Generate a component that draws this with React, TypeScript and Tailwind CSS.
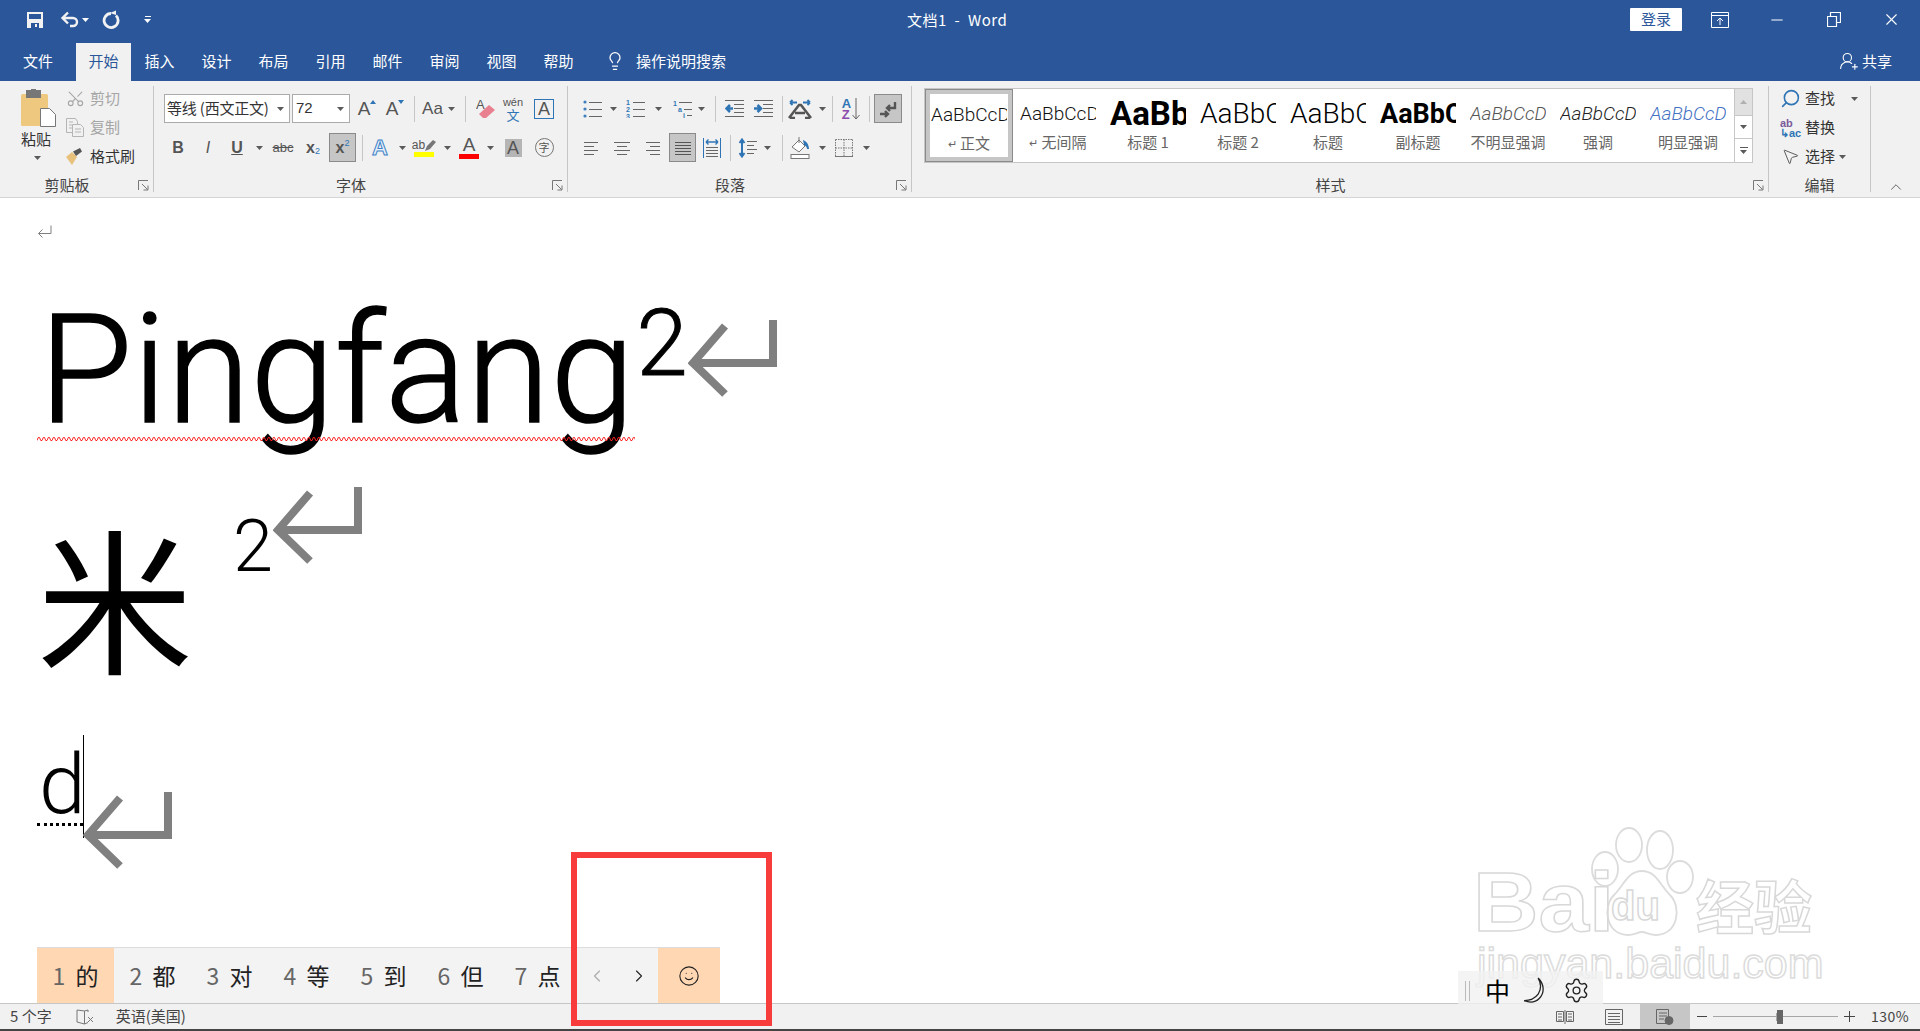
import type { ReactNode } from "react";
import {
  ChevronLeft,
  ChevronRight,
  ChevronUp,
  Lightbulb,
  Minus,
  MousePointer2,
  Scissors,
  Search,
  Settings,
  Smile,
  UserRoundPlus,
  X,
} from "lucide-react";

const Caret = ({ light }: { light?: boolean }) => (
  <svg width="7" height="4" viewBox="0 0 7 4" className="shrink-0">
    <path d="M0 0h7L3.5 4z" fill={light ? "#ffffff" : "#5a5a5a"} />
  </svg>
);

const Slot = ({ className, children }: { className: string; children?: ReactNode }) => (
  <div className={`flex h-full shrink-0 items-center justify-center ${className}`}>{children}</div>
);

const RowSep = ({ className }: { className: string }) => (
  <div className={`flex h-full shrink-0 items-center justify-center ${className}`}>
    <div className="h-[26px] w-px bg-[#c6c6c6]" />
  </div>
);

const Launcher = () => (
  <div className="flex w-[19px] shrink-0 items-center justify-center">
    <svg width="11" height="11" viewBox="0 0 11 11" fill="none" stroke="#777777">
      <path d="M.5 10V.5H10M4 4l5.5 5.5M5.5 10H10V5.5" />
    </svg>
  </div>
);

const Group = ({
  className,
  label,
  launcher = true,
  children,
}: {
  className: string;
  label: string;
  launcher?: boolean;
  children: ReactNode;
}) => (
  <div className={`flex h-full shrink-0 flex-col ${className}`}>
    <div className="h-[93px] min-h-0">{children}</div>
    <div className="flex h-[22px] items-center text-[15px] text-[#444444]">
      <span className="flex-1 text-center">{label}</span>
      {launcher && <Launcher />}
    </div>
  </div>
);

const GroupSep = () => <div className="my-[5px] w-px shrink-0 bg-[#c6c6c6]" />;

const Lines = ({ d, color = "#666666" }: { d: string; color?: string }) => (
  <svg width="18" height="16" viewBox="0 0 18 16" fill="none" stroke={color}>
    <path d={d} />
  </svg>
);

const BulletList = () => (
  <svg width="19" height="18" viewBox="0 0 19 18">
    {[2, 9, 16].map((y) => (
      <circle key={y} cx="2" cy={y} r="1.6" fill="#3f7fbf" />
    ))}
    <path d="M6 2.500h13M6 9.500h13M6 16.500h13" stroke="#666666" fill="none" />
  </svg>
);

const NumberList = () => (
  <svg width="19" height="18" viewBox="0 0 19 18">
    {["1", "2", "3"].map((n, i) => (
      <text key={n} x="0" y={5 + i * 7} fontSize="7" fontWeight="700" fill="#2f75b5" fontFamily="Liberation Sans">
        {n}
      </text>
    ))}
    <path d="M7 2.500h12M7 9.500h12M7 16.500h12" stroke="#666666" fill="none" />
  </svg>
);

const IndentIcon = ({ flip }: { flip?: boolean }) => (
  <svg width="19" height="18" viewBox="0 0 19 18" fill="none">
    <path d="M0 .5h19M9 4.500h10M9 8.500h10M9 12.500h10M0 16.500h19" stroke="#666666" />
    <path
      d={flip ? "M0 8.500h6M3.500 5l3.500 3.500L3.500 12" : "M8 8.500H2M5 5L1.500 8.500 5 12"}
      stroke="#2f75b5"
      strokeWidth="2.600"
    />
  </svg>
);

const StyleItem = ({
  preview,
  label,
  mark,
  className,
}: {
  preview: string;
  label: string;
  mark?: boolean;
  className: string;
}) => (
  <div className="flex h-full w-[90px] shrink-0 flex-col items-center">
    <div className="flex h-[50px] w-[76px] items-center justify-start overflow-hidden whitespace-nowrap">
      <span className={`[font-family:'Roboto','Liberation_Sans',sans-serif] ${className}`}>{preview}</span>
    </div>
    <div className="mt-[-6px] flex h-[19px] items-center gap-[3px] whitespace-nowrap text-[15px] text-[#666666]">
      {mark && <span className="text-[11px]">↵</span>}
      {label}
    </div>
  </div>
);

const ReturnMark = () => (
  <svg width="90" height="78" viewBox="0 0 90 78" fill="none" stroke="#808080" strokeWidth="8" className="shrink-0">
    <path d="M85 0v43H8" />
    <path d="M37 6L5 43l32 31" />
  </svg>
);

const Candidate = ({ n, ch, active }: { n: number; ch: string; active?: boolean }) => (
  <div
    className={`flex h-full w-[77px] shrink-0 items-center justify-center gap-[10px] ${active ? "bg-[#ffd7b3]" : ""}`}
  >
    <span className="text-[#666666]">{n}</span>
    <span className="text-[#222222]">{ch}</span>
  </div>
);

export default function App() {
  return (
    <div className="relative flex h-[1031px] w-[1920px] flex-col overflow-hidden bg-white [font-family:'Noto_Sans_CJK_SC','Liberation_Sans',sans-serif]">
      {/* title + tabs */}
      <div className="h-[81px] shrink-0 bg-[#2b579a] text-white">
        <div className="flex h-[41px] items-center pb-[2px]">
          <div className="flex w-[907px] shrink-0 items-center">
            <Slot className="ml-[24px] w-[22px]">
              <svg width="16" height="16" viewBox="0 0 16 16">
                <path d="M0 0h16v16H0z" fill="#f2f2f2" />
                <path d="M2 2h12v5H2zM4 11h8v5H4z" fill="#2b579a" />
                <path d="M8 12h2v3H8z" fill="#f2f2f2" />
              </svg>
            </Slot>
            <Slot className="ml-[13px] w-[22px]">
              <svg width="20" height="17" viewBox="0 0 20 17" fill="none" stroke="#f2f2f2" strokeWidth="2.400">
                <path d="M3 7h10a4 4 0 0 1 0 8h-3M8 1.500L2.500 7 8 12.500" />
              </svg>
            </Slot>
            <Slot className="w-[9px]">
              <Caret light />
            </Slot>
            <Slot className="ml-[11px] w-[20px]">
              <svg width="18" height="19" viewBox="0 0 18 19" fill="none" stroke="#f2f2f2" strokeWidth="2.800">
                <path d="M9 3.500a7 7 0 1 0 5 2" />
                <path d="M8 3l6-2.500V5z" fill="#f2f2f2" stroke="none" />
              </svg>
            </Slot>
            <div className="ml-[23px] flex flex-col items-center gap-[2px]">
              <div className="h-px w-[6px] bg-white" />
              <Caret light />
            </div>
          </div>
          <span className="whitespace-pre text-[15px] leading-none tracking-[0.5px]">文档1  -  Word</span>
          <div className="ml-auto flex items-center">
            <div className="flex h-[23px] w-[52px] items-center justify-center rounded-[1px] bg-white text-[15px] text-[#2b579a]">
              登录
            </div>
            <Slot className="ml-[27px] w-[22px]">
              <svg width="18" height="16" viewBox="0 0 18 16" fill="none" stroke="#ffffff">
                <path d="M.5.500h17v15H.5zM.5 3.500h17M9 13V6M6 9l3-3 3 3" />
              </svg>
            </Slot>
            <Slot className="ml-[35px] w-[22px]">
              <Minus size={18} strokeWidth={1.4} />
            </Slot>
            <Slot className="ml-[35px] w-[22px]">
              <svg width="14" height="15" viewBox="0 0 14 15" fill="none" stroke="#ffffff" strokeWidth="1.200">
                <path d="M.5 4.500h9v10h-9zM3.500 4.500v-4h10v10h-4" />
              </svg>
            </Slot>
            <Slot className="ml-[35px] mr-[18px] w-[22px]">
              <X size={19} strokeWidth={1.4} />
            </Slot>
          </div>
        </div>
        <div className="flex h-[40px] items-end text-[15px]">
          <div className="flex h-[38px] w-[76px] items-center justify-center pb-[2px]">文件</div>
          <div className="flex h-[38px] w-[55px] items-center justify-center bg-[#f1f1f1] pb-[2px] text-[#2b579a]">
            开始
          </div>
          {["插入", "设计", "布局", "引用", "邮件", "审阅", "视图", "帮助"].map((t) => (
            <div key={t} className="flex h-[38px] w-[57px] items-center justify-center pb-[2px]">
              {t}
            </div>
          ))}
          <div className="flex h-[38px] items-center pb-[2px]">
            <Slot className="ml-[18px] w-[20px]">
              <Lightbulb size={20} strokeWidth={1.5} />
            </Slot>
            <span className="ml-[11px]">操作说明搜索</span>
          </div>
          <div className="ml-auto mr-[28px] flex h-[38px] items-center gap-[3px] pb-[2px]">
            <UserRoundPlus size={20} strokeWidth={1.3} />
            <span>共享</span>
          </div>
        </div>
      </div>

      {/* ribbon */}
      <div className="flex h-[117px] shrink-0 border-b border-[#d4d4d4] bg-[#f1f1f1] text-[#444444]">
        <Group className="w-[153px]" label="剪贴板">
          <div className="flex h-full">
            <div className="flex w-[66px] shrink-0 flex-col items-center pt-[8px]">
              <svg width="36" height="38" viewBox="0 0 36 38" className="ml-[10px]">
                <rect x="1" y="5" width="27" height="32" rx="1.500" fill="#edc87e" />
                <path d="M6 1h5V0h5v1h5v8H6z" fill="#777777" />
                <path d="M20.500 19.500h9l6 6v12h-15z" fill="#ffffff" stroke="#777777" />
              </svg>
              <span className="ml-[6px] mt-[2px] text-[15px] leading-[20px] text-[#333333]">粘贴</span>
              <div className="ml-[8px] mt-[7px]">
                <Caret />
              </div>
            </div>
            <div className="flex flex-col pt-[3px] text-[15px]">
              <div className="flex h-[29px] items-center gap-[5px] text-[#a6a6a6]">
                <Scissors size={19} strokeWidth={1.4} className="-rotate-90" />
                <span>剪切</span>
              </div>
              <div className="flex h-[29px] items-center gap-[5px] text-[#a6a6a6]">
                <svg width="19" height="19" viewBox="0 0 19 19" fill="none" stroke="#b5b5b5">
                  <path d="M.5.500h9l2 3v11H.5zM3 4h4M3 7h3M3 10h3" />
                  <path d="M6.500 6.500h8l3 3v9h-11zM9 11h6M9 14h6" fill="#f1f1f1" />
                </svg>
                <span>复制</span>
              </div>
              <div className="flex h-[29px] items-center gap-[5px] text-[#333333]">
                <svg width="19" height="17" viewBox="0 0 19 17">
                  <path d="M0 9l6-5 5 5-5 8z" fill="#e8c27c" />
                  <path d="M7 3.500l7-3.500 2 3.500-6 4.500z" fill="#555555" />
                </svg>
                <span>格式刷</span>
              </div>
            </div>
          </div>
        </Group>
        <GroupSep />

        <Group className="w-[413px]" label="字体">
          <div className="flex h-full flex-col gap-[10px] pt-[13px]">
            <div className="flex h-[29px] items-center pl-[10px] text-[#555555] [font-family:'Liberation_Sans','Noto_Sans_CJK_SC',sans-serif]">
              <div className="flex h-full w-[126px] shrink-0 items-center justify-between border border-[#ababab] bg-white pl-[2px] pr-[5px] text-[15px] text-[#333333] [font-family:'Noto_Sans_CJK_SC',sans-serif]">
                <span className="whitespace-nowrap tracking-[-0.2px]">等线 (西文正文)</span>
                <Caret />
              </div>
              <div className="ml-[2px] flex h-full w-[58px] shrink-0 items-center justify-between border border-[#ababab] bg-white pl-[3px] pr-[5px] text-[15px] text-[#333333]">
                <span>72</span>
                <Caret />
              </div>
              <Slot className="ml-[3px] w-[28px]">
                <span className="text-[19px] leading-none">A</span>
                <svg width="6" height="4" viewBox="0 0 6 4" className="mb-[14px]">
                  <path d="M0 4h6L3 0z" fill="#2f75b5" />
                </svg>
              </Slot>
              <Slot className="w-[28px]">
                <span className="text-[19px] leading-none">A</span>
                <svg width="6" height="4" viewBox="0 0 6 4" className="mb-[14px]">
                  <path d="M0 0h6L3 4z" fill="#2f75b5" />
                </svg>
              </Slot>
              <RowSep className="w-[10px]" />
              <Slot className="w-[39px] gap-[5px]">
                <span className="text-[17px] leading-none">Aa</span>
                <Caret />
              </Slot>
              <RowSep className="w-[14px]" />
              <Slot className="w-[27px]">
                <svg width="20" height="21" viewBox="0 0 20 21">
                  <text x="0" y="11" fontSize="13" fill="#555555" fontFamily="Liberation Sans">
                    A
                  </text>
                  <path d="M3 16l10-9 6 5-9 8H7z" fill="#e8808f" />
                </svg>
              </Slot>
              <Slot className="w-[28px] flex-col">
                <span className="text-[11px] leading-[11px]">wén</span>
                <span className="text-[13px] leading-[13px] text-[#2f75b5] [font-family:'Noto_Sans_CJK_SC',sans-serif]">
                  文
                </span>
              </Slot>
              <Slot className="w-[34px]">
                <div className="flex h-[20px] w-[20px] items-center justify-center border border-[#2f75b5] text-[18px] leading-none">
                  A
                </div>
              </Slot>
            </div>
            <div className="flex h-[29px] items-center pl-[10px] text-[#555555] [font-family:'Liberation_Sans','Noto_Sans_CJK_SC',sans-serif]">
              <Slot className="w-[28px] text-[16px] font-bold">B</Slot>
              <Slot className="w-[32px] text-[16px] italic">I</Slot>
              <Slot className="w-[26px] text-[16px] font-bold underline">U</Slot>
              <Slot className="w-[18px]">
                <Caret />
              </Slot>
              <Slot className="w-[30px] text-[13px] line-through">abc</Slot>
              <Slot className="w-[30px] text-[16px] font-bold">
                x<span className="mt-[8px] text-[9px] font-normal text-[#2f75b5]">2</span>
              </Slot>
              <Slot className="ml-[1px] w-[27px] border border-[#8a8a8a] bg-[#c6c6c6] text-[16px] font-bold">
                x<span className="mb-[8px] text-[9px] font-normal text-[#2f75b5]">2</span>
              </Slot>
              <RowSep className="w-[12px]" />
              <Slot className="w-[24px]">
                <span className="text-[22px] font-bold leading-none text-[#e6f0fa] [-webkit-text-stroke:1px_#3f83c7]">A</span>
              </Slot>
              <Slot className="w-[16px] pl-[4px]">
                <Caret />
              </Slot>
              <Slot className="w-[32px] flex-col">
                <div className="flex items-center">
                  <span className="text-[12px] leading-[14px]">ab</span>
                  <svg width="11" height="13" viewBox="0 0 11 13">
                    <path d="M0 12l2-5 6-6 3 2-6 7z" fill="#777777" />
                  </svg>
                </div>
                <div className="h-[5px] w-[20px] bg-[#ffff00]" />
              </Slot>
              <Slot className="w-[14px]">
                <Caret />
              </Slot>
              <Slot className="w-[30px] flex-col">
                <span className="text-[19px] leading-[17px]">A</span>
                <div className="mt-[1px] h-[5px] w-[20px] bg-[#ff0000]" />
              </Slot>
              <Slot className="w-[12px]">
                <Caret />
              </Slot>
              <Slot className="w-[34px]">
                <div className="flex h-[18px] w-[17px] items-center justify-center bg-[#b5b5b5] text-[18px] leading-none">A</div>
              </Slot>
              <Slot className="w-[28px]">
                <div className="flex h-[19px] w-[19px] items-center justify-center rounded-full border border-[#777777] text-[11px] leading-none [font-family:'Noto_Sans_CJK_SC',sans-serif]">
                  字
                </div>
              </Slot>
            </div>
          </div>
        </Group>
        <GroupSep />

        <Group className="w-[343px]" label="段落">
          <div className="flex h-full flex-col gap-[10px] pt-[13px]">
            <div className="flex h-[29px] items-center pl-[12px]">
              <Slot className="w-[24px]">
                <BulletList />
              </Slot>
              <Slot className="w-[18px]">
                <Caret />
              </Slot>
              <Slot className="w-[26px]">
                <NumberList />
              </Slot>
              <Slot className="w-[20px]">
                <Caret />
              </Slot>
              <Slot className="w-[28px]">
                <svg width="19" height="18" viewBox="0 0 19 18" fill="none">
                  <text x="0" y="6" fontSize="7" fontWeight="700" fill="#2f75b5" fontFamily="Liberation Sans">
                    1
                  </text>
                  <text x="5" y="12" fontSize="7" fontWeight="700" fill="#2f75b5" fontFamily="Liberation Sans">
                    a
                  </text>
                  <text x="10" y="18" fontSize="7" fontWeight="700" fill="#2f75b5" fontFamily="Liberation Sans">
                    i
                  </text>
                  <path d="M6 2.500h13M11 9.500h8M14 15.500h5" stroke="#666666" />
                </svg>
              </Slot>
              <Slot className="w-[10px]">
                <Caret />
              </Slot>
              <RowSep className="w-[18px]" />
              <Slot className="w-[20px]">
                <IndentIcon />
              </Slot>
              <Slot className="w-[38px]">
                <IndentIcon flip />
              </Slot>
              <RowSep className="w-px" />
              <Slot className="w-[34px]">
                <svg width="24" height="20" viewBox="0 0 24 20" fill="none">
                  <path d="M1 19L11 6h2l10 13M2 19h5M17 19h5M7 14h10" stroke="#555555" strokeWidth="2.500" />
                  <path d="M2 3.500h7M2 3.500L4.500 1M2 3.500L4.500 6M22 3.500h-7M22 3.500L19.500 1M22 3.500L19.500 6" stroke="#2f75b5" strokeWidth="1.800" />
                </svg>
              </Slot>
              <Slot className="w-[10px]">
                <Caret />
              </Slot>
              <RowSep className="w-[10px]" />
              <Slot className="w-[28px] gap-[1px]">
                <div className="flex flex-col text-[13px] font-bold leading-[11px] [font-family:'Liberation_Sans',sans-serif]">
                  <span className="text-[#2f75b5]">A</span>
                  <span className="text-[#8a4bab]">Z</span>
                </div>
                <svg width="8" height="22" viewBox="0 0 8 22" fill="none" stroke="#666666">
                  <path d="M4 0v21M.5 17L4 21l3.500-4" />
                </svg>
              </Slot>
              <RowSep className="w-[8px]" />
              <Slot className="ml-px w-[28px] border border-[#8a8a8a] bg-[#c6c6c6]">
                <svg width="18" height="18" viewBox="0 0 18 18" fill="none" stroke="#555555" strokeWidth="2.400">
                  <path d="M16 2v6H8M11 5L8 8l3 3M1 14h8M6 11l3 3-3 3" />
                </svg>
              </Slot>
            </div>
            <div className="flex h-[29px] items-center pl-[12px]">
              <Slot className="w-[24px]">
                <Lines d="M1 2.500h14M1 6.500h10M1 10.500h14M1 14.500h10" />
              </Slot>
              <Slot className="w-[36px]">
                <Lines d="M1 2.500h16M4 6.500h10M1 10.500h16M4 14.500h10" />
              </Slot>
              <Slot className="w-[24px]">
                <Lines d="M3 2.500h14M7 6.500h10M3 10.500h14M7 14.500h10" />
              </Slot>
              <Slot className="ml-[5px] w-[27px] border border-[#8a8a8a] bg-[#c6c6c6]">
                <Lines d="M1 2.500h16M1 5.500h16M1 8.500h16M1 11.500h16M1 14.500h16" color="#555555" />
              </Slot>
              <Slot className="w-[32px]">
                <svg width="18" height="20" viewBox="0 0 18 20" fill="none">
                  <path d="M.5 0v20M17.500 0v20" stroke="#2f75b5" />
                  <path d="M3 4h12M3 4l2.500-2.500M3 4l2.500 2.500M15 4l-2.500-2.500M15 4l-2.500 2.500" stroke="#2f75b5" strokeWidth="1.400" />
                  <path d="M3 9.500h12M3 12.500h12M3 15.500h12M3 18.500h12" stroke="#666666" />
                </svg>
              </Slot>
              <RowSep className="w-[4px]" />
              <Slot className="ml-[2px] w-[28px]">
                <svg width="18" height="20" viewBox="0 0 18 20" fill="none">
                  <path d="M3 2v16M.5 5L3 1.500 5.500 5M.5 15L3 18.500 5.500 15" stroke="#2f75b5" strokeWidth="2" />
                  <path d="M8 3.500h10M8 7.500h7M8 11.500h10M8 15.500h7" stroke="#666666" />
                </svg>
              </Slot>
              <Slot className="w-[10px]">
                <Caret />
              </Slot>
              <RowSep className="w-[20px]" />
              <Slot className="w-[16px]">
                <svg width="20" height="22" viewBox="0 0 20 22" className="shrink-0" fill="none">
                  <path d="M2 10l7-7 6 6-6 6z" stroke="#777777" fill="#ffffff" />
                  <path d="M9 0v6" stroke="#777777" />
                  <path d="M13 3c3 1 6 4 6 9h-2c0-2-1-3-3-4z" fill="#2f75b5" />
                  <rect x="1" y="17.500" width="18" height="4" stroke="#777777" fill="#ffffff" />
                </svg>
              </Slot>
              <Slot className="w-[26px] pl-[2px]">
                <Caret />
              </Slot>
              <Slot className="w-[20px]">
                <svg width="18" height="18" viewBox="0 0 18 18" fill="none" stroke="#777777">
                  <path d="M.5.500h17M.5.500v17M17.500.500v17M9 .500v17M.5 9h17" strokeDasharray="1.500 1" />
                  <path d="M0 17.500h18" />
                </svg>
              </Slot>
              <Slot className="w-[24px]">
                <Caret />
              </Slot>
            </div>
          </div>
        </Group>
        <GroupSep />

        <Group className="w-[856px]" label="样式">
          <div className="h-full pl-[12px] pt-[7px]">
            <div className="flex h-[75px] w-[829px] border border-[#c6c6c6] bg-white">
              <div className="flex h-full w-[88px] shrink-0 items-center justify-center border border-[#8a8a8a]">
                <div className="flex h-full w-full flex-col items-center border-[4px] border-[#c6c6c6]">
                  <div className="flex h-[42px] w-[76px] items-center overflow-hidden whitespace-nowrap">
                    <span className="text-[19px] font-light text-[#111111] [font-family:'Roboto','Liberation_Sans',sans-serif]">
                      AaBbCcDd
                    </span>
                  </div>
                  <div className="mt-[-2px] flex h-[19px] items-center gap-[3px] text-[15px] text-[#666666]">
                    <span className="text-[11px]">↵</span>
                    正文
                  </div>
                </div>
              </div>
              <StyleItem preview="AaBbCcDd" label="无间隔" mark className="text-[19px] font-light text-[#111111]" />
              <StyleItem preview="AaBb" label="标题 1" className="text-[33px] font-bold text-black" />
              <StyleItem preview="AaBbC" label="标题 2" className="text-[28px] font-light text-black" />
              <StyleItem preview="AaBbC" label="标题" className="text-[28px] font-light text-black" />
              <StyleItem preview="AaBbC" label="副标题" className="text-[27px] font-bold text-black" />
              <StyleItem preview="AaBbCcDd" label="不明显强调" className="text-[19px] font-light italic text-[#555555]" />
              <StyleItem preview="AaBbCcDd" label="强调" className="text-[19px] font-light italic text-[#222222]" />
              <StyleItem preview="AaBbCcDd" label="明显强调" className="text-[19px] font-light italic text-[#4472c4]" />
              <div className="ml-auto flex w-[18px] shrink-0 flex-col border-l border-[#c6c6c6]">
                <div className="flex h-[26px] items-center justify-center bg-[#e1e1e1]">
                  <svg width="7" height="4" viewBox="0 0 7 4">
                    <path d="M0 4h7L3.500 0z" fill="#b0b0b0" />
                  </svg>
                </div>
                <div className="flex h-[24px] items-center justify-center border-y border-[#c6c6c6]">
                  <Caret />
                </div>
                <div className="flex flex-1 flex-col items-center justify-center gap-[2px]">
                  <div className="h-px w-[8px] bg-[#5a5a5a]" />
                  <Caret />
                </div>
              </div>
            </div>
          </div>
        </Group>
        <GroupSep />

        <Group className="w-[101px]" label="编辑" launcher={false}>
          <div className="flex flex-col pl-[11px] pt-[3px] text-[15px] text-[#333333]">
            <div className="flex h-[29px] items-center gap-[4px]">
              <Search size={21} strokeWidth={1.8} className="-scale-x-100 text-[#2f75b5]" />
              <span>查找</span>
              <div className="ml-[12px]">
                <Caret />
              </div>
            </div>
            <div className="flex h-[29px] items-center gap-[4px]">
              <div className="flex w-[21px] flex-col text-[11px] font-bold leading-[10px] [font-family:'Liberation_Sans',sans-serif]">
                <span className="text-[#7a5a9a]">ab</span>
                <span className="whitespace-nowrap text-[#2f75b5]">↳ac</span>
              </div>
              <span>替换</span>
            </div>
            <div className="flex h-[29px] items-center gap-[4px]">
              <MousePointer2 size={19} strokeWidth={1.2} className="w-[21px] text-[#555555]" />
              <span>选择</span>
              <Caret />
            </div>
          </div>
        </Group>
        <GroupSep />
        <div className="flex flex-1 items-end justify-center pb-[1px]">
          <ChevronUp size={18} strokeWidth={1.2} className="text-[#555555]" />
        </div>
      </div>

      {/* document */}
      <div className="flex h-[805px] shrink-0 flex-col pl-[37px]">
        <svg width="15" height="14" viewBox="0 0 15 14" fill="none" stroke="#808080" className="mt-[27px] shrink-0">
          <path d="M14 .5v8H1.500M5.500 4.500L1.500 8.500l4 4" />
        </svg>
        <div className="relative mt-[50px] flex h-[170px] items-start">
          <span className="ml-[2px] mt-[-4px] text-[152px] font-light leading-[170px] text-black [font-family:'Roboto','Liberation_Sans',sans-serif] [-webkit-text-stroke:1.5px_#000000]">
            Pingfang
          </span>
          <span className="ml-[2px] mt-[5px] text-[92px] font-light leading-[100px] text-black [font-family:'Roboto','Liberation_Sans',sans-serif] [-webkit-text-stroke:1px_#000000]">
            2
          </span>
          <div className="mt-[31px]">
            <ReturnMark />
          </div>
          <svg width="598" height="6" className="absolute left-0 top-[147px]">
            <defs>
              <pattern id="wavy" width="5" height="6" patternUnits="userSpaceOnUse">
                <path d="M0 4.500L1.250 1.500 2.500 1.500 3.750 4.500 5 4.500" fill="none" stroke="#ff2020" strokeWidth="1" />
              </pattern>
            </defs>
            <rect width="598" height="6" fill="url(#wavy)" />
          </svg>
        </div>
        <div className="mt-[28px] flex h-[190px] items-start">
          <span className="mt-[32px] text-[156px] leading-[150px] text-black">米</span>
          <span className="ml-[40px] mt-[18px] text-[72px] font-light leading-[84px] text-black [font-family:'Roboto','Liberation_Sans',sans-serif]">
            2
          </span>
          <div>
            <ReturnMark />
          </div>
        </div>
        <div className="mt-[58px] flex h-[135px] items-start">
          <div className="flex h-[103px] w-[46px] shrink-0 flex-col">
            <span className="ml-[2px] mt-[10px] h-[80px] text-[84px] font-light leading-[80px] text-black [font-family:'Roboto','Liberation_Sans',sans-serif]">
              d
            </span>
            <div className="mt-[-2px] w-[46px] border-t-[3px] border-dotted border-black" />
          </div>
          <div className="h-[103px] w-px shrink-0 bg-black" />
          <div className="ml-[-1px] mt-[57px]">
            <ReturnMark />
          </div>
        </div>
      </div>

      {/* status bar */}
      <div className="flex h-[28px] shrink-0 items-center border-t border-b-2 border-t-[#c6c6c6] border-b-[#444444] bg-[#f1f1f1] text-[15px] text-[#444444]">
        <span className="ml-[10px] whitespace-nowrap">5 个字</span>
        <svg width="18" height="16" viewBox="0 0 18 16" fill="none" stroke="#777777" className="ml-[24px] shrink-0">
          <path d="M8.500 2v13L1 13V1zM8.500 2L12 1v2M12 13.500l-3.500 1.500M12 8l5 5M17 8l-5 5" />
        </svg>
        <span className="ml-[22px] whitespace-nowrap">英语(美国)</span>
        <div className="ml-auto flex h-full items-center">
          <svg width="18" height="14" viewBox="0 0 18 14" fill="none" stroke="#666666">
            <path d="M.5 1.500h7v10h-7zM10.500 1.500h7v10h-7zM9 0v14M2 4h4M2 7h4M2 10h4M12 4h4M12 7h4M12 10h4" />
          </svg>
          <svg width="18" height="16" viewBox="0 0 18 16" fill="none" stroke="#666666" className="ml-[31px]">
            <path d="M.5.500h17v15H.5zM3 4.500h12M3 7.500h12M3 10.500h12M3 13.500h12" />
          </svg>
          <div className="ml-[17px] flex h-full w-[50px] items-center justify-center bg-[#c6c6c6]">
            <svg width="18" height="16" viewBox="0 0 18 16" fill="none" stroke="#666666">
              <path d="M.5.500h12v14H.5zM3 4h8M3 7h8M3 10h5" />
              <circle cx="13" cy="11.500" r="4" fill="#666666" />
            </svg>
          </div>
          <div className="ml-[7px] h-px w-[10px] bg-[#444444]" />
          <div className="relative ml-[6px] flex h-full w-[125px] items-center">
            <div className="h-px w-full bg-[#a6a6a6]" />
            <div className="absolute left-[63px] h-[8px] w-px bg-[#a6a6a6]" />
            <div className="absolute left-[64px] h-[14px] w-[6px] bg-[#666666]" />
          </div>
          <svg width="11" height="11" viewBox="0 0 11 11" stroke="#444444" className="ml-[6px]">
            <path d="M0 5.500h11M5.500 0v11" />
          </svg>
          <span className="ml-[16px] mr-[11px] w-[38px] text-[14px] tracking-[0.5px]">130%</span>
        </div>
      </div>

      {/* candidate window */}
      <div className="absolute left-[37px] top-[947px] flex h-[56px] w-[683px] items-center border-t border-[#dddddd] bg-[#f3f3f3] text-[23px]">
        <Candidate n={1} ch="的" active />
        <Candidate n={2} ch="都" />
        <Candidate n={3} ch="对" />
        <Candidate n={4} ch="等" />
        <Candidate n={5} ch="到" />
        <Candidate n={6} ch="但" />
        <Candidate n={7} ch="点" />
        <div className="flex h-full w-[41px] shrink-0 items-center justify-center text-[#aaaaaa]">
          <ChevronLeft size={20} strokeWidth={1.3} />
        </div>
        <div className="flex h-full w-[41px] shrink-0 items-center justify-center pl-[3px] text-[#222222]">
          <ChevronRight size={20} strokeWidth={1.3} />
        </div>
        <div className="flex h-full flex-1 items-center justify-center bg-[#ffd7b3] text-[#222222]">
          <Smile size={22} strokeWidth={1.2} />
        </div>
      </div>

      {/* red annotation box */}
      <div className="absolute left-[571px] top-[852px] h-[174px] w-[201px] border-[6px] border-[#f83c3c]" />

      {/* watermark */}
      <svg width="110" height="115" viewBox="0 0 110 115" fill="none" stroke="#dcdcdc" strokeWidth="1.800" className="absolute left-[1588px] top-[825px]">
        <ellipse cx="41" cy="20" rx="13" ry="17" />
        <ellipse cx="72" cy="25" rx="13" ry="19" />
        <ellipse cx="17" cy="44" rx="13" ry="17" />
        <ellipse cx="92" cy="52" rx="13" ry="16" />
        <path d="M54 46c14 0 18 14 28 24 12 12 8 40-14 40-6 0-10-3-14-3s-8 3-14 3c-22 0-26-28-14-40 10-10 14-24 28-24z" />
      </svg>
      <span className="absolute left-[1473px] top-[858px] origin-left scale-x-[1.08] text-[84px] font-bold leading-[88px] text-transparent [font-family:'Liberation_Sans',sans-serif] [-webkit-text-stroke:1.5px_#d8d8d8]">
        Bai
      </span>
      <span className="absolute left-[1611px] top-[884px] text-[40px] font-bold leading-[44px] text-transparent [font-family:'Liberation_Sans',sans-serif] [-webkit-text-stroke:1.5px_#d8d8d8]">
        du
      </span>
      <span className="absolute left-[1696px] top-[864px] whitespace-nowrap text-[58px] font-bold leading-[80px] text-transparent [-webkit-text-stroke:1.5px_#d8d8d8]">
        经验
      </span>
      <span className="absolute left-[1477px] top-[938px] whitespace-nowrap text-[43px] leading-[50px] text-transparent [font-family:'Liberation_Sans',sans-serif] [-webkit-text-stroke:1.5px_#dcdcdc]">
        jingyan.baidu.com
      </span>

      {/* IME toolbar */}
      <div className="absolute left-[1458px] top-[971px] flex h-[39px] w-[145px] items-center bg-[#f1f1f1]/80">
        <div className="ml-[7px] h-[20px] w-[5px] shrink-0 border-x border-[#bbbbbb]" />
        <span className="ml-[15px] text-[25px] leading-none text-black">中</span>
        <svg width="26" height="28" viewBox="0 0 24 26" fill="none" stroke="#222222" strokeWidth="1.200" className="ml-[13px] shrink-0">
          <path d="M14 1c6 6 6 14 1 19-4 4-9 4-14 2 6 0 10-2 13-6 3-5 3-10 0-15z" />
        </svg>
        <Settings size={27} strokeWidth={1.2} className="ml-[14px] text-[#222222]" />
      </div>
    </div>
  );
}
